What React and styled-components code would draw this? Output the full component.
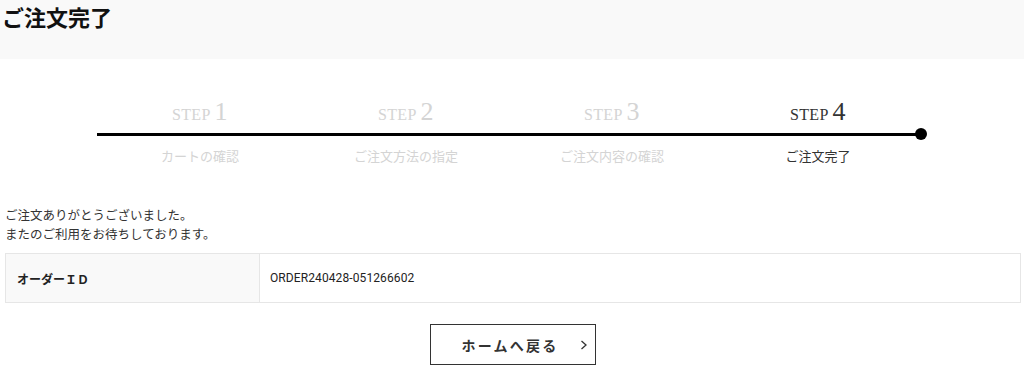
import React from "react";
import styled, { createGlobalStyle } from "styled-components";

const GlobalStyle = createGlobalStyle`
  body {
    margin: 0;
    background: #fff;
    color: #333;
    font-family: "Noto Sans CJK JP", "Noto Sans", sans-serif;
  }
`;

// ページタイトル帯
const Header = styled.header`
  background: #f9f9f9;
  height: 59px;
  padding: 0 2px;
  box-sizing: border-box;
`;

const Title = styled.h1`
  margin: 0;
  font-size: 22px;
  line-height: 32px;
  font-weight: 700;
  color: #111;
`;

// ステップ表示
const StepList = styled.ol`
  list-style: none;
  margin: 40px 0 0;
  padding: 0 103px 0 97px;
  display: grid;
  grid-template-columns: repeat(4, 1fr);
`;

const Step = styled.li`
  display: flex;
  flex-direction: column;
  align-items: center;
  color: ${(p) => (p.$active ? "#333" : "#d4d4d4")};
`;

const StepTitle = styled.div`
  font-family: "Liberation Serif", serif;
  font-size: 16px;
  line-height: 26px;
  height: 26px;
  letter-spacing: 0.3px;
  span {
    font-size: 26px;
    margin-left: 4px;
  }
`;

const Rail = styled.div`
  position: relative;
  align-self: stretch;
  height: 3px;
  margin-top: 8px;
  background: #000;

  ${(p) =>
    p.$last &&
    `
    &::after {
      content: "";
      position: absolute;
      right: -6px;
      top: -5px;
      width: 12px;
      height: 12px;
      border-radius: 50%;
      background: #000;
    }
  `}
`;

const StepCaption = styled.div`
  margin-top: 11px;
  font-size: 13px;
  line-height: 18px;
`;

// 本文
const Body = styled.main`
  padding: 0 3px 0 5px;
`;

const Message = styled.p`
  margin: 40px 0 0;
  font-size: 12.5px;
  line-height: 19px;
  color: #333;
`;

const InfoTable = styled.table`
  width: 100%;
  margin-top: 10px;
  border-collapse: collapse;
  font-size: 12px;
  color: #222;
`;

const Th = styled.th`
  width: 254px;
  height: 49px;
  box-sizing: border-box;
  padding: 0 11px;
  text-align: left;
  font-weight: 700;
  background: #f9f9f9;
  border: 1px solid #e6e6e6;
`;

const Td = styled.td`
  padding: 0 10px;
  border: 1px solid #e6e6e6;
  font-family: "Roboto", "Liberation Sans", sans-serif;
  letter-spacing: 0.1px;
`;

const ButtonRow = styled.div`
  display: flex;
  justify-content: center;
  margin-top: 21px;
`;

const HomeButton = styled.a`
  display: flex;
  align-items: center;
  justify-content: center;
  gap: 22px;
  width: 166px;
  height: 41px;
  box-sizing: border-box;
  padding-left: 24px;
  border: 1px solid #333;
  color: #333;
  font-size: 14px;
  font-weight: 700;
  letter-spacing: 2.2px;
  text-decoration: none;
`;

const Chevron = styled.svg`
  width: 8px;
  height: 10px;
`;

const steps = [
  { no: 1, label: "カートの確認" },
  { no: 2, label: "ご注文方法の指定" },
  { no: 3, label: "ご注文内容の確認" },
  { no: 4, label: "ご注文完了" },
];

const App = () => (
  <>
    <GlobalStyle />
    <Header>
      <Title>ご注文完了</Title>
    </Header>
    <StepList>
      {steps.map((s, i) => (
        <Step key={s.no} $active={s.no === 4}>
          <StepTitle>
            STEP<span>{s.no}</span>
          </StepTitle>
          <Rail $last={i === steps.length - 1} />
          <StepCaption>{s.label}</StepCaption>
        </Step>
      ))}
    </StepList>
    <Body>
      <Message>
        ご注文ありがとうございました。
        <br />
        またのご利用をお待ちしております。
      </Message>
      <InfoTable>
        <tbody>
          <tr>
            <Th>オーダーＩＤ</Th>
            <Td>ORDER240428-051266602</Td>
          </tr>
        </tbody>
      </InfoTable>
      <ButtonRow>
        <HomeButton href="#">
          ホームへ戻る
          <Chevron viewBox="0 0 8 10">
            <path d="M1.5 1 L6 5 L1.5 9" fill="none" stroke="#333" strokeWidth="1.3" />
          </Chevron>
        </HomeButton>
      </ButtonRow>
    </Body>
  </>
);

export default App;
